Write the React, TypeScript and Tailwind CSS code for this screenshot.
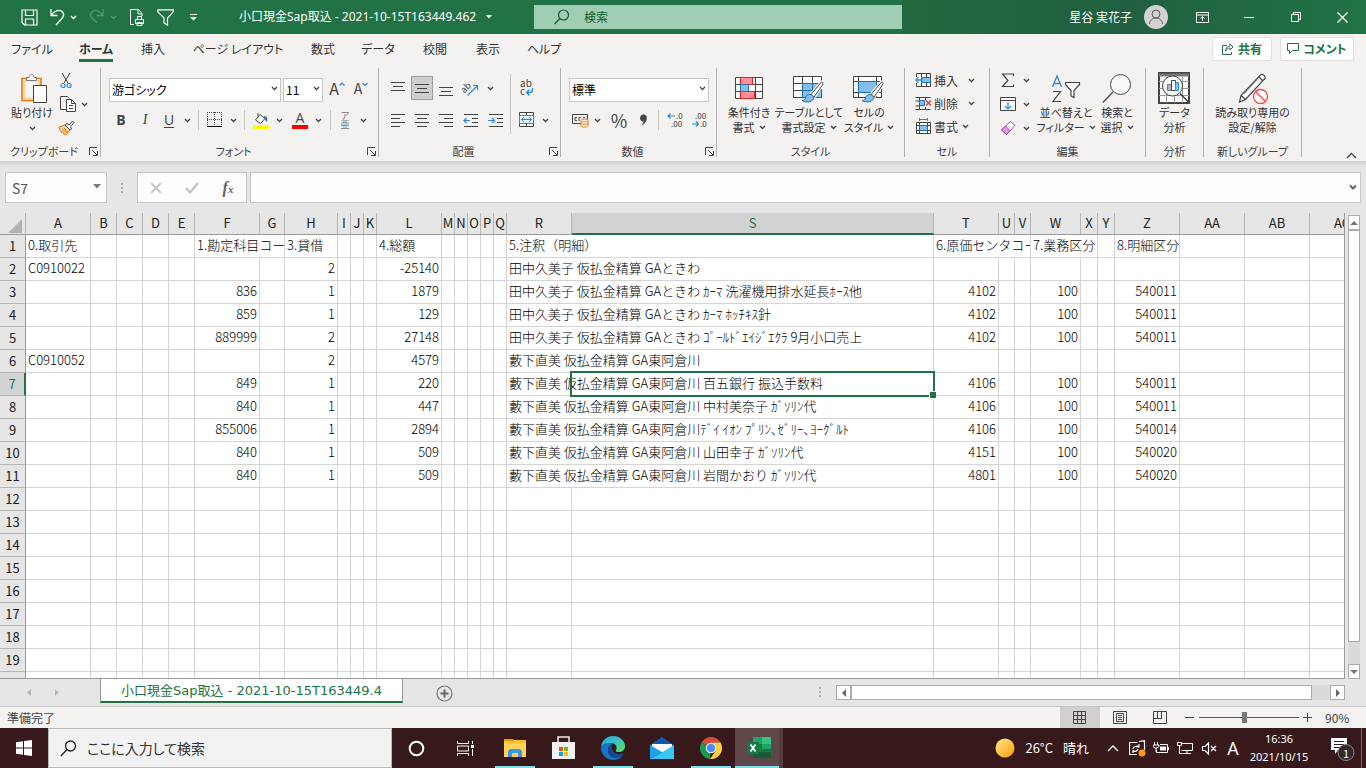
import type { ReactNode } from 'react';

const columns = [
  { name: 'A', width: 65 },
  { name: 'B', width: 26 },
  { name: 'C', width: 26 },
  { name: 'D', width: 26 },
  { name: 'E', width: 26 },
  { name: 'F', width: 65 },
  { name: 'G', width: 25 },
  { name: 'H', width: 53 },
  { name: 'I', width: 13 },
  { name: 'J', width: 13 },
  { name: 'K', width: 13 },
  { name: 'L', width: 65 },
  { name: 'M', width: 13 },
  { name: 'N', width: 13 },
  { name: 'O', width: 13 },
  { name: 'P', width: 13 },
  { name: 'Q', width: 13 },
  { name: 'R', width: 65 },
  { name: 'S', width: 362 },
  { name: 'T', width: 65 },
  { name: 'U', width: 16 },
  { name: 'V', width: 16 },
  { name: 'W', width: 50 },
  { name: 'X', width: 17 },
  { name: 'Y', width: 17 },
  { name: 'Z', width: 65 },
  { name: 'AA', width: 65 },
  { name: 'AB', width: 65 },
  { name: 'AC', width: 65 },
];

const ROW_HEADER_WIDTH = 26;
const tableWidth = columns.reduce((sum, c) => sum + c.width, ROW_HEADER_WIDTH);

type Cell = { v: string; span?: number };

const line = (h: string, l: string, note: string, rest: Record<string, Cell> = {}): Record<string, Cell> => ({
  H: { v: h },
  L: { v: l },
  R: { v: note, span: 2 },
  ...rest,
});

const detail = (f: string, t: string, z: string): Record<string, Cell> => ({
  F: { v: f },
  T: { v: t },
  W: { v: '100' },
  Z: { v: z },
});

const sheet: Record<string, Cell>[] = [
  {
    A: { v: '0.取引先' },
    F: { v: '1.勘定科目コー', span: 2 },
    H: { v: '3.貸借' },
    L: { v: '4.総額' },
    R: { v: '5.注釈（明細）', span: 2 },
    T: { v: '6.原価センタコー', span: 3 },
    W: { v: '7.業務区分', span: 2 },
    Z: { v: '8.明細区分' },
  },
  line('2', '-25140', '田中久美子 仮払金精算 GAときわ', { A: { v: 'C0910022' } }),
  line('1', '1879', '田中久美子 仮払金精算 GAときわ ｶｰﾏ 洗濯機用排水延長ﾎｰｽ他', detail('836', '4102', '540011')),
  line('1', '129', '田中久美子 仮払金精算 GAときわ ｶｰﾏ ﾎｯﾁｷｽ針', detail('859', '4102', '540011')),
  line('2', '27148', '田中久美子 仮払金精算 GAときわ ｺﾞｰﾙﾄﾞｴｲｼﾞｴｸﾗ 9月小口売上', detail('889999', '4102', '540011')),
  line('2', '4579', '藪下直美 仮払金精算 GA東阿倉川', { A: { v: 'C0910052' } }),
  line('1', '220', '藪下直美 仮払金精算 GA東阿倉川 百五銀行 振込手数料', detail('849', '4106', '540011')),
  line('1', '447', '藪下直美 仮払金精算 GA東阿倉川 中村美奈子 ｶﾞｿﾘﾝ代', detail('840', '4106', '540011')),
  line('1', '2894', '藪下直美 仮払金精算 GA東阿倉川ﾃﾞｲ ｲｵﾝ ﾌﾟﾘﾝ､ｾﾞﾘｰ､ﾖｰｸﾞﾙﾄ', detail('855006', '4106', '540014')),
  line('1', '509', '藪下直美 仮払金精算 GA東阿倉川 山田幸子 ｶﾞｿﾘﾝ代', detail('840', '4151', '540020')),
  line('1', '509', '藪下直美 仮払金精算 GA東阿倉川 岩間かおり ｶﾞｿﾘﾝ代', detail('840', '4801', '540020')),
];

const ROW_COUNT = 20;
const isNumber = (v: string) => /^-?\d+$/.test(v);

const tabs = [
  { label: 'ファイル', width: 'w-16' },
  { label: 'ホーム', width: 'w-16', active: true },
  { label: '挿入', width: 'w-[50px]' },
  { label: 'ページ レイアウト', width: 'w-[120px]' },
  { label: '数式', width: 'w-[50px]' },
  { label: 'データ', width: 'w-[60px]' },
  { label: '校閲', width: 'w-[54px]' },
  { label: '表示', width: 'w-[52px]' },
  { label: 'ヘルプ', width: 'w-[60px]' },
];

/* ---------- small pieces ---------- */

function Svg({ w, h, children, className = '' }: { w: number; h: number; children: ReactNode; className?: string }) {
  return (
    <svg width={w} height={h} viewBox={`0 0 ${w} ${h}`} fill="none" className={`shrink-0 ${className}`} aria-hidden="true">
      {children}
    </svg>
  );
}

function Chev({ className = 'text-[#444]' }: { className?: string }) {
  return (
    <Svg w={7} h={5} className={className}>
      <path d="M1 1l2.5 2.5L6 1" stroke="currentColor" strokeWidth="1.3" />
    </Svg>
  );
}

function IconButton({ label, className = 'w-6', children }: { label: string; className?: string; children: ReactNode }) {
  return (
    <button type="button" aria-label={label} className={`flex h-6 shrink-0 items-center justify-center ${className}`}>
      {children}
    </button>
  );
}

function DropButton({ label, className = 'w-[13px]' }: { label: string; className?: string }) {
  return (
    <IconButton label={label} className={className}>
      <Chev />
    </IconButton>
  );
}

function Sep({ className = 'mx-1' }: { className?: string }) {
  return <div className={`h-5 w-px shrink-0 bg-[#c8c6c4] ${className}`} />;
}

function Dropdown({ label, value, className }: { label: string; value: string; className: string }) {
  return (
    <div className={`relative h-6 shrink-0 ${className}`}>
      <select aria-label={label} className="h-full w-full appearance-none border border-[#c6c6c6] bg-white pl-0.5 text-xs text-black">
        <option>{value}</option>
      </select>
      <span className="pointer-events-none absolute top-2.5 right-[3px] flex">
        <Chev />
      </span>
    </div>
  );
}

function Group({ label, width, launcher, children }: { label: string; width: string; launcher?: boolean; children: ReactNode }) {
  return (
    <div className={`flex shrink-0 ${width}`}>
      <div className="flex min-w-0 flex-1 flex-col">
        <div className="flex h-[74px]">{children}</div>
        <div className="flex h-[19px] items-center text-[11px] text-[#444]">
          <span className={`flex-1 text-center whitespace-nowrap ${launcher ? 'pl-0.5' : ''}`}>{label}</span>
          {launcher && (
            <button type="button" aria-label={`${label}の設定`} className="flex w-3.5 justify-center">
              <Svg w={9} h={9}>
                <path d="M8 .5H.5V8M3 3l5 5M8.500 4v4.500H4" stroke="#444" />
              </Svg>
            </button>
          )}
        </div>
      </div>
      <div className="h-[89px] w-px bg-[#b3b0ad]" />
    </div>
  );
}

function BigButton({ icon, lines, className, chevron }: { icon: ReactNode; lines: [string, string]; className: string; chevron?: boolean }) {
  return (
    <button type="button" className={`flex shrink-0 flex-col items-center text-[11px] leading-[15px] whitespace-nowrap text-[#333] ${className}`}>
      <span className="flex h-[37px] items-center pt-1">{icon}</span>
      <span>{lines[0]}</span>
      <span className="flex items-center gap-1">
        {lines[1]}
        {chevron && <Chev />}
      </span>
    </button>
  );
}

function AlignIcon({ rows, y = 1 }: { rows: [number, number][]; y?: number }) {
  return (
    <Svg w={14} h={15}>
      {rows.map(([x, w], i) => (
        <rect key={i} x={x} y={y + i * 4} width={w} height="1" fill="#444" />
      ))}
    </Svg>
  );
}

/* ---------- ribbon drawings ---------- */

const PasteIcon = () => (
  <Svg w={28} h={32}>
    <path d="M2 5.500h19v22H2z" fill="#fff" stroke="#e07a10" strokeWidth="1.600" />
    <path d="M4 7.500h15v18H4z" fill="#f6f5f4" stroke="#fbd590" strokeWidth="2" />
    <path d="M6.500 7.500V4.500H9c.4-4 4.600-4 5 0h2.500v3z" fill="#fff" stroke="#777" />
    <path d="M13.500 12.500h13v17h-13z" fill="#fff" stroke="#444" />
  </Svg>
);

const CutIcon = () => (
  <Svg w={12} h={17}>
    <path d="M2 1l6 10M10 1L4 11" stroke="#444" />
    <circle cx="3" cy="13.500" r="2" stroke="#2b88d8" strokeWidth="1.200" />
    <circle cx="9" cy="13.500" r="2" stroke="#2b88d8" strokeWidth="1.200" />
  </Svg>
);

const CopyIcon = () => (
  <Svg w={16} h={17}>
    <path d="M6 13.500H.5v-13h7l2 2" stroke="#444" />
    <path d="M6.500 3.500h5l4 4v8h-9zM11.500 3.500v4h4M9 9.500h4M9 12.500h4" fill="#fff" stroke="#444" />
  </Svg>
);

const PainterIcon = () => (
  <Svg w={17} h={16}>
    <path d="M1 7l6-2 5 5-4 5-2-1-1-2-2 0z" fill="#fbd8a0" stroke="#e07a10" />
    <path d="M4 9l5 4M6 8l4 4" stroke="#e07a10" />
    <path d="M7 5l2-1.500L11 5l3.500-4L16 2.500 12.500 6.500 13.500 9 12 10z" fill="#fff" stroke="#444" />
  </Svg>
);

const BordersIcon = () => (
  <Svg w={16} h={16}>
    <path d="M.5 0v14M7.500 0v14M14.500 0v14M0 .5h15M0 7.500h15" stroke="#444" strokeDasharray="1 1" />
    <path d="M0 14.500h15" stroke="#111" />
  </Svg>
);

const FillIcon = () => (
  <Svg w={16} h={17}>
    <path d="M7 2.500L2.500 8l5 3.500L12 6.500 7 2.500zM5 4.500V1" fill="#fff" stroke="#444" />
    <path d="M11 4c3 0 3.500 2 3 6-1.500-1-2-3-3-6z" fill="#2b6cb0" />
    <path d="M0 13h16v4H0z" fill="#ff0" />
  </Svg>
);

const OrientationIcon = () => (
  <Svg w={17} h={17}>
    <text x="-1" y="10" fontSize="9" fill="#444" transform="rotate(-45 5 8)">ab</text>
    <path d="M5.500 15.500L15 6M11 5.500h4.500V10" stroke="#2b88d8" strokeWidth="1.200" />
  </Svg>
);

const WrapIcon = () => (
  <Svg w={16} h={18}>
    <text x="1" y="8" fontSize="10" fill="#444">ab</text>
    <text x="1" y="16" fontSize="10" fill="#444">c</text>
    <path d="M13.500 9v1.500c0 2-1 3-3 3H8M10.500 10.500l-3 3 3 3" stroke="#2b88d8" strokeWidth="1.300" />
  </Svg>
);

const IndentIcon = ({ back }: { back?: boolean }) => (
  <Svg w={15} h={15}>
    <path d="M1 1.500h14M9 5.500h6M9 9.500h6M1 13.500h14" stroke="#444" />
    <path d={back ? 'M7 7.500H1M3.500 5L1 7.500 3.500 10' : 'M0 7.500h6M4 5l2.500 2.500L4 10'} stroke="#2b88d8" strokeWidth="1.200" />
  </Svg>
);

const MergeIcon = () => (
  <Svg w={16} h={16}>
    <path d="M.5 .5h14v14H.5zM7.500 .5v3M7.500 11v4" fill="#fff" stroke="#444" />
    <path d="M.5 3.500h14v8H.5z" fill="#e8f4ff" stroke="#2b88d8" />
    <path d="M2.500 7.500h10M5 5L2.500 7.500 5 10M10 5l2.500 2.500L10 10" stroke="#2b88d8" />
  </Svg>
);

const CurrencyIcon = () => (
  <Svg w={17} h={15}>
    <path d="M.5 1.500h15v9H.5z" stroke="#444" />
    <path d="M5 4.500H3v3h2M7 8V4.500h2M11 4.500h2" stroke="#444" />
    <path d="M9 7.500v5c0 2 7 2 7 0v-5z" fill="#fff" stroke="#e07a10" />
    <ellipse cx="12.500" cy="7.500" rx="3.500" ry="1.500" fill="#fff" stroke="#e07a10" />
    <path d="M9 10c0 2 7 2 7 0" stroke="#e07a10" />
  </Svg>
);

const DecimalIcon = ({ more }: { more?: boolean }) => (
  <Svg w={17} h={16}>
    <text x={more ? 9 : 4} y="7" fontSize="8" fill="#333">{more ? '.0' : '.00'}</text>
    <text x={more ? 4 : 9} y="15" fontSize="8" fill="#333">{more ? '.00' : '.0'}</text>
    <path d={more ? 'M8 4H1M3.500 1.500L1 4l2.500 2.500' : 'M1 12h6.500M5 9.500L7.500 12 5 14.500'} stroke="#2b88d8" strokeWidth="1.200" />
  </Svg>
);

const Brush = () => (
  <>
    <path d="M28.500 8c1.500 0 2 1 1 3L21 23l-3-2.500z" fill="#fff" stroke="#fff" strokeWidth="3" />
    <path d="M28.500 8c1.500 0 2 1 1 3L21 23l-3-2.500z" fill="#fff" stroke="#444" />
    <path d="M18 20.500c-3-.5-5 1-5.500 3.500-.4 2-1.500 2.500-3.500 2.500 5 3 12 1 12-3.500z" fill="#83beec" stroke="#1f6fb2" />
  </>
);

const ConditionalIcon = () => (
  <Svg w={29} h={24}>
    <path d="M.5 .5h27v21H.5zM5.500 .5v21M20.500 .5v21M.5 7.500h27M.5 14.500h27" fill="#fff" stroke="#444" />
    <path d="M5.500 .5h12v7h-12zM5.500 14.500h14v7h-14z" fill="#ff8f95" stroke="#e02020" />
    <path d="M5.500 7.500h8v7h-8z" fill="#83beec" stroke="#1f6fb2" />
  </Svg>
);

const TableFormatIcon = () => (
  <Svg w={32} h={30}>
    <path d="M.5 2.500h28v21H.5z" fill="#fff" stroke="#444" />
    <path d="M9.500 9.500h19v14h-19z" fill="#83beec" />
    <path d="M9.500 2.500v7M19.500 2.500v7M.5 9.500h9M.5 16.500h9" stroke="#444" />
    <path d="M9.500 9.500h19v14h-19zM19.500 9.500v14M9.500 16.500h19" stroke="#1f6fb2" />
    <Brush />
  </Svg>
);

const CellStyleIcon = () => (
  <Svg w={32} h={30}>
    <path d="M.5 2.500h28v21H.5zM5.500 2.500v21M23.500 2.500v21M.5 7.500h28M.5 18.500h28" fill="#fff" stroke="#444" />
    <path d="M5.500 7.500h18v11h-18z" fill="#83beec" stroke="#1f6fb2" />
    <Brush />
  </Svg>
);

const InsertIcon = () => (
  <Svg w={17} h={15}>
    <path d="M1.500 .5h14v13h-14zM6.500 .5v13M11.500 .5v13M1.500 4.500h14M1.500 9.500h14" fill="#fff" stroke="#444" />
    <path d="M0 4h8v6H0z" fill="#fff" />
    <path d="M6.500 4.500h9v5h-9z" fill="#83beec" stroke="#1f6fb2" />
    <path d="M8 7H.8M3.500 4L.8 7l2.700 3" stroke="#2b88d8" strokeWidth="1.300" />
  </Svg>
);

const DeleteIcon = () => (
  <Svg w={17} h={15}>
    <path d="M.5 1.500h15M.5 13.500h15M4.500 1.500v12M10.500 1.500v3M10.500 11v2.500M.5 5h4M.5 10h4" stroke="#444" />
    <path d="M4.500 4.500h5v5h-5z" fill="#83beec" stroke="#1f6fb2" />
    <path d="M11 4.500l5 5M16 4.500l-5 5" stroke="#e8373d" strokeWidth="1.500" />
  </Svg>
);

const FormatIcon = () => (
  <Svg w={17} h={17}>
    <path d="M1.500 4.500h14v11h-14zM4.500 4.500v11M12.500 4.500v11M1.500 7.500h14M1.500 12.500h14" fill="#fff" stroke="#444" />
    <path d="M4.500 7.500h8v5h-8z" fill="#83beec" stroke="#1f6fb2" />
    <path d="M4.500 1.500h8M4.500 0v3M12.500 0v3" stroke="#2b88d8" />
  </Svg>
);

const SumIcon = () => (
  <Svg w={14} h={15}>
    <path d="M12.500 3V1H1.500l5.500 6.500-5.500 6h11v-2" stroke="#444" strokeWidth="1.200" />
  </Svg>
);

const FillDownIcon = () => (
  <Svg w={16} h={14}>
    <path d="M.5 .5h15v13H.5zM.5 3.500h15" fill="#fff" stroke="#444" />
    <path d="M8 5v7M5 9l3 3 3-3" stroke="#2b88d8" strokeWidth="1.200" />
  </Svg>
);

const EraserIcon = () => (
  <Svg w={17} h={16}>
    <path d="M10.500 1.500l4.500 4-8.500 9-5-4.500z" fill="#fff" stroke="#a33fb0" />
    <path d="M5.500 6L10 10.500l-3.500 4-5-4.500z" fill="#e19be8" stroke="#a33fb0" />
  </Svg>
);

const SortFilterIcon = () => (
  <Svg w={30} h={30}>
    <path d="M1.500 13L6 2l4.500 11M3 9.500h6" stroke="#2b88d8" strokeWidth="1.300" />
    <path d="M2 17.500h7.500L2 27.500h8" stroke="#444" strokeWidth="1.200" />
    <path d="M14.500 8.500h14v2l-5.500 6v7l-3-1.500V16.500l-5.500-6z" fill="#fff" stroke="#444" strokeWidth="1.200" />
  </Svg>
);

const FindIcon = () => (
  <Svg w={30} h={31}>
    <circle cx="18.500" cy="11.500" r="10" fill="#fafafa" stroke="#444" />
    <path d="M11 19L.8 29.500" stroke="#444" strokeWidth="1.200" />
  </Svg>
);

const AnalysisIcon = () => (
  <Svg w={33} h={33}>
    <path d="M1 1h30v30H1z" fill="#fff" stroke="#444" strokeWidth="2" />
    <path d="M1 3h30" stroke="#777" strokeWidth="3" />
    <path d="M1 9.500h30M1 16.500h30M1 23.500h30M8.500 5v26M16.500 22v9M24.500 5v26" stroke="#999" />
    <circle cx="14.500" cy="14" r="10" fill="#fafafa" stroke="#444" />
    <path d="M9.500 12.500h4v6h-4z" fill="#b0b0b0" stroke="#777" />
    <path d="M13.500 8.500h4v10h-4z" fill="#fff" stroke="#444" />
    <path d="M17.500 10.500h3v8h-3z" fill="#83beec" stroke="#2b88d8" />
    <path d="M22 21.500l10 10" stroke="#444" strokeWidth="1.600" />
  </Svg>
);

const PencilIcon = () => (
  <Svg w={32} h={32}>
    <path d="M24 1.500c2-1 5 2 4 4L8.500 26.500l-6 2.500 1.500-6.500zM22 4l4 4M4 22.500l4.500 4" fill="#fff" stroke="#444" strokeWidth="1.200" />
    <path d="M20 6.500L7 21" stroke="#777" />
    <circle cx="23.500" cy="23.500" r="7" fill="#fff" stroke="#f0484c" strokeWidth="1.300" />
    <path d="M18.500 18.500l10 10" stroke="#f0484c" strokeWidth="1.300" />
  </Svg>
);

/* ---------- sections ---------- */

function TitleBar() {
  return (
    <header className="flex h-[34px] shrink-0 items-center bg-[#217346] text-xs text-white">
      <div className="flex w-[534px] shrink-0 items-center pl-[17px]">
        <IconButton label="上書き保存">
          <Svg w={17} h={17}>
            <path d="M1 1h15v15H3.500L1 13.500zM4.500 1v5.500h8V1M4.500 16v-6h8v6" stroke="currentColor" strokeWidth="1.200" />
          </Svg>
        </IconButton>
        <IconButton label="元に戻す" className="ml-1 w-6">
          <Svg w={17} h={18}>
            <path d="M2 1v6.500h6.500M2 7.500C6 2 11 1 13.500 4s1 5-1 7L7 17" stroke="currentColor" strokeWidth="1.300" />
          </Svg>
        </IconButton>
        <IconButton label="元に戻すの一覧" className="w-2"><Chev className="text-white" /></IconButton>
        <IconButton label="やり直し" className="ml-2 w-6 text-[#4f9970]">
          <Svg w={17} h={18}>
            <path d="M14 1v6.500H7.500M14 7.500C10 2 6 1 3 4s-1 5 1 7l4 3.500" stroke="currentColor" strokeWidth="1.300" />
          </Svg>
        </IconButton>
        <IconButton label="やり直しの一覧" className="w-2"><Chev className="text-[#4f9970]" /></IconButton>
        <IconButton label="印刷プレビュー" className="ml-1.5 w-7">
          <Svg w={15} h={17}>
            <path d="M4 15.500H.5V.5h8l3.500 4V7M8 .5V5h4" stroke="currentColor" />
            <path d="M5.500 10.500h8v4h-8zM7.500 10.500v-3h4v3M7 13.500h5v3H7z" stroke="currentColor" />
          </Svg>
        </IconButton>
        <IconButton label="フィルター" className="w-7">
          <Svg w={17} h={17}>
            <path d="M.8 .8h15.400v2L10.500 9v7L7 14V9L.8 2.800z" stroke="currentColor" strokeWidth="1.200" />
          </Svg>
        </IconButton>
        <IconButton label="クイック アクセスのカスタマイズ" className="w-7">
          <Svg w={7} h={7}>
            <path d="M0 .5h7" stroke="currentColor" />
            <path d="M0 3h7L3.500 6.500z" fill="currentColor" />
          </Svg>
        </IconButton>
        <button type="button" className="ml-8 flex items-center gap-2.5 font-['Noto_Sans','Noto_Sans_CJK_JP',sans-serif] whitespace-nowrap">
          小口現金Sap取込 - 2021-10-15T163449.462
          <Svg w={6} h={4}><path d="M0 0h6L3 3.500z" fill="currentColor" /></Svg>
        </button>
      </div>
      <label className="flex h-6 min-w-0 flex-1 items-center gap-3.5 bg-[#a0ceb5] pl-5 text-[#0e5c2f]">
        <Svg w={16} h={16}>
          <circle cx="9.500" cy="6" r="5" stroke="currentColor" strokeWidth="1.200" />
          <path d="M6 9.500L.5 15" stroke="currentColor" strokeWidth="1.200" />
        </Svg>
        <input type="text" placeholder="検索" aria-label="検索" className="min-w-0 flex-1 bg-transparent outline-none placeholder:text-[#0e5c2f]" />
      </label>
      <div className="flex h-full w-[464px] shrink-0 items-center justify-end bg-linear-to-r from-[#21693f] via-[#206040] to-[#217346]">
        <button type="button" className="mr-[22px] flex items-center gap-3 whitespace-nowrap">
          星谷 実花子
          <Svg w={24} h={24}>
            <circle cx="12" cy="12" r="12" fill="#d2d2d2" />
            <circle cx="12" cy="9" r="4" stroke="#555" />
            <path d="M5.500 19c.5-8 12.500-8 13 0" stroke="#555" />
          </Svg>
        </button>
        <IconButton label="リボンの表示オプション">
          <Svg w={13} h={11}>
            <path d="M.5 .5h12v10H.5zM.5 3h12M6.500 9V5M4.500 6.500l2-2 2 2" stroke="currentColor" />
          </Svg>
        </IconButton>
        <IconButton label="最小化" className="w-[70px]"><Svg w={10} h={1}><path d="M0 .5h10" stroke="currentColor" /></Svg></IconButton>
        <IconButton label="元のサイズに戻す">
          <Svg w={10} h={10}>
            <path d="M.5 2.500h7v7h-7zM2.500 2.500v-2h7v7h-2" stroke="currentColor" />
          </Svg>
        </IconButton>
        <IconButton label="閉じる" className="mr-3 ml-[22px] w-6">
          <Svg w={11} h={11}><path d="M.5 .5l10 10M10.500 .5l-10 10" stroke="currentColor" strokeWidth="1.200" /></Svg>
        </IconButton>
      </div>
    </header>
  );
}

function TabRow() {
  return (
    <nav className="flex h-[34px] shrink-0 items-center justify-between bg-[#f3f2f1]">
      <div className="flex pb-0.5">
        {tabs.map((tab) => (
          <button key={tab.label} type="button" className={`flex flex-col items-center text-xs leading-5 whitespace-nowrap text-[#333] ${tab.width}`}>
            <span className={tab.active ? 'font-bold' : ''}>{tab.label}</span>
            <span className={`h-[3px] w-[34px] ${tab.active ? 'bg-[#217346]' : ''}`} />
          </button>
        ))}
      </div>
      <div className="mr-3 flex gap-2 pb-1 text-xs font-bold text-[#217346]">
        <button type="button" className="flex h-6 w-[60px] items-center justify-center gap-1 rounded-xs border border-[#e1dfdd] bg-white whitespace-nowrap">
          <Svg w={12} h={12}>
            <path d="M5 2.500H.5v9h9V9M8 .8L11 4 8 7V5C6 5 4.500 6 3.500 8 3.500 5 5.500 3 8 3z" stroke="currentColor" />
          </Svg>
          共有
        </button>
        <button type="button" className="flex h-6 w-[74px] items-center justify-center gap-1 rounded-xs border border-[#e1dfdd] bg-white whitespace-nowrap">
          <Svg w={12} h={12}><path d="M.5 .5h11v7H5.500l-3 3v-3h-2z" stroke="currentColor" /></Svg>
          コメント
        </button>
      </div>
    </nav>
  );
}

function Ribbon() {
  return (
    <section className="flex h-[93px] shrink-0 bg-[#f3f2f1]">
      <Group label="クリップボード" width="w-[101px]" launcher>
        <button type="button" className="ml-2 flex w-12 flex-col items-center text-[11px] leading-[15px] whitespace-nowrap text-[#333]">
          <span className="flex h-[37px] items-center pt-1 pl-1"><PasteIcon /></span>
          貼り付け
          <span className="flex h-4 items-center"><Chev /></span>
        </button>
        <div className="flex flex-col">
          <IconButton label="切り取り" className="w-5"><CutIcon /></IconButton>
          <div className="flex">
            <IconButton label="コピー" className="w-6"><CopyIcon /></IconButton>
            <DropButton label="コピーの種類" className="w-2" />
          </div>
          <IconButton label="書式のコピー" className="w-5"><PainterIcon /></IconButton>
        </div>
      </Group>

      <Group label="フォント" width="w-[278px]" launcher>
        <div className="flex flex-col gap-2 pt-2 pl-2">
          <div className="flex items-center">
            <Dropdown label="フォント名" value="游ゴシック" className="w-[172px]" />
            <Dropdown label="フォント サイズ" value="11" className="ml-0.5 w-10" />
            <IconButton label="フォント サイズの拡大" className="ml-0.5 w-6 text-base text-[#444]">
              A<Svg w={6} h={12}><path d="M.5 3.500l2.500-2.500 2.500 2.500" stroke="#2b88d8" strokeWidth="1.200" /></Svg>
            </IconButton>
            <IconButton label="フォント サイズの縮小" className="w-6 text-sm text-[#444]">
              A<Svg w={6} h={12}><path d="M.5 1l2.500 2.500L5.500 1" stroke="#2b88d8" strokeWidth="1.200" /></Svg>
            </IconButton>
          </div>
          <div className="flex items-center font-['Open_Sans','Noto_Sans_CJK_JP',sans-serif] text-sm text-[#444]">
            <IconButton label="太字"><span className="font-bold">B</span></IconButton>
            <IconButton label="斜体"><span className="font-['Liberation_Serif',serif] italic">I</span></IconButton>
            <IconButton label="下線"><span className="underline underline-offset-2">U</span></IconButton>
            <DropButton label="下線の種類" />
            <Sep />
            <IconButton label="罫線"><BordersIcon /></IconButton>
            <DropButton label="罫線の種類" />
            <Sep />
            <IconButton label="塗りつぶしの色"><FillIcon /></IconButton>
            <DropButton label="塗りつぶしの色の一覧" />
            <IconButton label="フォントの色" className="w-7">
              <span className="flex flex-col items-center leading-[14px]">
                A<span className="h-1 w-4 bg-[#f00]" />
              </span>
            </IconButton>
            <DropButton label="フォントの色の一覧" className="w-2" />
            <Sep className="ml-2" />
            <IconButton label="ふりがなの表示" className="w-7">
              <span className="flex flex-col items-center text-[9px] leading-[9px] text-[#777]">
                <span>ア</span>
                <span>亜</span>
              </span>
            </IconButton>
            <DropButton label="ふりがなの設定" className="w-2" />
          </div>
        </div>
      </Group>

      <Group label="配置" width="w-[182px]" launcher>
        <div className="grid grid-cols-[24px_24px_24px_26px_22px] content-start gap-y-2 pt-2 pl-[7px]">
          <IconButton label="上揃え"><AlignIcon rows={[[0, 14], [2, 10], [0, 14]]} /></IconButton>
          <IconButton label="上下中央揃え" className="w-[22px] justify-self-center border border-[#a19f9d] bg-[#d0cecc]">
            <AlignIcon rows={[[0, 14], [2, 10], [0, 14]]} y={3} />
          </IconButton>
          <IconButton label="下揃え"><AlignIcon rows={[[0, 14], [2, 10], [0, 14]]} y={6} /></IconButton>
          <IconButton label="方向"><OrientationIcon /></IconButton>
          <DropButton label="方向の一覧" />
          <IconButton label="左揃え"><AlignIcon rows={[[0, 14], [0, 9], [0, 14], [0, 9]]} /></IconButton>
          <IconButton label="中央揃え"><AlignIcon rows={[[0, 14], [2, 10], [0, 14], [2, 10]]} /></IconButton>
          <IconButton label="右揃え"><AlignIcon rows={[[0, 14], [5, 9], [0, 14], [5, 9]]} /></IconButton>
          <IconButton label="インデントを減らす"><IndentIcon back /></IconButton>
          <IconButton label="インデントを増やす" className="w-[22px]"><IndentIcon /></IconButton>
        </div>
        <div className="mt-1.5 ml-1 h-[60px] w-px bg-[#c8c6c4]" />
        <div className="flex flex-col gap-2 pt-2 pl-1">
          <IconButton label="折り返して全体を表示する"><WrapIcon /></IconButton>
          <div className="flex">
            <IconButton label="セルを結合して中央揃え"><MergeIcon /></IconButton>
            <DropButton label="結合の種類" />
          </div>
        </div>
      </Group>

      <Group label="数値" width="w-[156px]" launcher>
        <div className="flex flex-col gap-2 pt-2 pl-2">
          <Dropdown label="表示形式" value="標準" className="w-[140px]" />
          <div className="flex items-center text-[#444]">
            <IconButton label="通貨表示形式" className="w-[22px]"><CurrencyIcon /></IconButton>
            <DropButton label="通貨の一覧" className="w-3" />
            <IconButton label="パーセント スタイル" className="w-8 text-lg">%</IconButton>
            <IconButton label="桁区切りスタイル" className="w-4">
              <Svg w={10} h={14}>
                <path d="M5 1.500c3-.5 4.500 2 3.500 5.500-.8 2.800-3 5-6 6 2-1.500 3-3 3-4.500C1 8.500 1 2 5 1.500z" fill="#444" />
              </Svg>
            </IconButton>
            <Sep className="mr-1 ml-[7px]" />
            <IconButton label="小数点以下の表示桁数を増やす"><DecimalIcon more /></IconButton>
            <IconButton label="小数点以下の表示桁数を減らす"><DecimalIcon /></IconButton>
          </div>
        </div>
      </Group>

      <Group label="スタイル" width="w-[188px]">
        <BigButton className="ml-1 w-14" icon={<ConditionalIcon />} lines={['条件付き', '書式']} chevron />
        <BigButton className="w-16" icon={<TableFormatIcon />} lines={['テーブルとして', '書式設定']} chevron />
        <BigButton className="w-14" icon={<CellStyleIcon />} lines={['セルの', 'スタイル']} chevron />
      </Group>

      <Group label="セル" width="w-[85px]">
        <div className="flex flex-col pt-px pl-2.5 text-xs text-[#333]">
          <button type="button" className="flex h-[23px] items-center gap-0.5 whitespace-nowrap"><InsertIcon />挿入<Chev className="ml-2 text-[#444]" /></button>
          <button type="button" className="flex h-[23px] items-center gap-0.5 whitespace-nowrap"><DeleteIcon />削除<Chev className="ml-2 text-[#444]" /></button>
          <button type="button" className="flex h-[23px] items-center gap-0.5 whitespace-nowrap"><FormatIcon />書式<Chev className="ml-0.5 text-[#444]" /></button>
        </div>
      </Group>

      <Group label="編集" width="w-[156px]">
        <div className="flex flex-col pl-1.5">
          <div className="flex"><IconButton label="合計"><SumIcon /></IconButton><DropButton label="合計の一覧" /></div>
          <div className="flex"><IconButton label="フィル"><FillDownIcon /></IconButton><DropButton label="フィルの一覧" /></div>
          <div className="flex"><IconButton label="クリア"><EraserIcon /></IconButton><DropButton label="クリアの一覧" /></div>
        </div>
        <BigButton className="ml-1 w-[58px]" icon={<SortFilterIcon />} lines={['並べ替えと', 'フィルター']} chevron />
        <BigButton className="w-11" icon={<FindIcon />} lines={['検索と', '選択']} chevron />
      </Group>

      <Group label="分析" width="w-[58px]">
        <BigButton className="w-full" icon={<AnalysisIcon />} lines={['データ', '分析']} />
      </Group>

      <Group label="新しいグループ" width="w-[98px]">
        <BigButton className="w-full" icon={<PencilIcon />} lines={['読み取り専用の', '設定/解除']} />
      </Group>

      <div className="flex flex-1 items-end justify-end pr-2">
        <button type="button" aria-label="リボンを折りたたむ" className="flex h-3 w-3 items-center">
          <Svg w={11} h={7}><path d="M1 6l4.500-4.500L10 6" stroke="#444" strokeWidth="1.300" /></Svg>
        </button>
      </div>
    </section>
  );
}

function Dots() {
  return (
    <Svg w={2} h={10}>
      <path d="M0 0h2v2H0zM0 4h2v2H0zM0 8h2v2H0z" fill="#aaa" />
    </Svg>
  );
}

function FormulaBar() {
  return (
    <section className="shrink-0 bg-[#e6e6e6]">
      <div className="h-1.5 bg-linear-to-b from-[#d0d0d0] to-[#e6e6e6]" />
      <div className="flex h-[46px] items-start pt-[5px] pr-[5px] pl-[5px]">
        <div className="relative h-[31px] w-[102px] shrink-0">
          <input aria-label="名前ボックス" defaultValue="S7" className="h-full w-full border border-[#c6c6c6] bg-[#fdfdfd] pl-1.5 text-sm text-[#555]" />
          <span className="pointer-events-none absolute top-3 right-1.5 flex">
            <Svg w={8} h={5}><path d="M0 0h8L4 4.500z" fill="#777" /></Svg>
          </span>
        </div>
        <div className="flex h-[31px] w-[30px] items-center justify-center"><Dots /></div>
        <div className="flex h-[31px] w-[110px] shrink-0 items-center justify-around border border-[#c6c6c6] bg-[#fdfdfd]">
          <IconButton label="キャンセル">
            <Svg w={12} h={12}><path d="M1 1l10 10M11 1L1 11" stroke="#c4c4c4" strokeWidth="1.800" /></Svg>
          </IconButton>
          <IconButton label="入力">
            <Svg w={14} h={12}><path d="M1 6l4 4.500L13 1" stroke="#c4c4c4" strokeWidth="2.400" /></Svg>
          </IconButton>
          <IconButton label="関数の挿入">
            <span className="font-['Liberation_Serif',serif] text-base font-bold text-[#666] italic">f<span className="text-[11px]">x</span></span>
          </IconButton>
        </div>
        <div className="relative ml-[3px] h-[31px] min-w-0 flex-1">
          <input aria-label="数式バー" className="h-full w-full border border-[#c6c6c6] bg-[#fdfdfd] px-2 text-sm" />
          <span className="pointer-events-none absolute top-3 right-1 flex">
            <Svg w={8} h={7}><path d="M1 1.500l3 3 3-3" stroke="#666" strokeWidth="2" /></Svg>
          </span>
        </div>
      </div>
    </section>
  );
}

function SheetRow({ index }: { index: number }) {
  const row = sheet[index] ?? {};
  const active = index === 6;
  const cells: ReactNode[] = [];
  for (let c = 0; c < columns.length; ) {
    const cell = row[columns[c].name];
    const span = cell?.span ?? 1;
    const right = cell && isNumber(cell.v);
    const selected = active && columns[c].name === 'R';
    cells.push(
      <td
        key={c}
        colSpan={span}
        className={`border-r border-b border-[#d4d4d4] p-0 align-top leading-5 whitespace-nowrap ${selected ? 'relative' : 'overflow-hidden'} ${right ? 'pr-0.5 text-right' : 'pl-0.5 text-left'}`}
      >
        {cell?.v}
        {selected && (
          <div className="absolute -top-0.5 left-[63px] h-[26px] w-[365px] border-2 border-[#217346]">
            <span className="absolute -right-[3px] -bottom-[3px] h-[7px] w-[7px] border-t border-l border-white bg-[#217346]" />
          </div>
        )}
      </td>,
    );
    c += span;
  }
  return (
    <tr className="h-[23px]">
      <th
        scope="row"
        className={`border-b border-b-[#b5b5b5] p-0 text-center align-top leading-[22px] font-normal ${active ? 'border-r-2 border-r-[#217346] bg-[#d2d2d2] text-[#217346]' : 'border-r border-r-[#999] bg-[#e6e6e6] text-[#222]'}`}
      >
        {index + 1}
      </th>
      {cells}
    </tr>
  );
}

function SheetArea() {
  return (
    <main className="flex min-h-0 flex-1 bg-[#e6e6e6]">
      <div className="min-w-0 flex-1 overflow-hidden border-r border-b border-[#999] bg-white font-['Noto_Sans_CJK_JP',sans-serif] text-[13px] font-light text-black [font-feature-settings:normal]">
        <table className="table-fixed border-separate border-spacing-0" style={{ width: tableWidth }}>
          <colgroup>
            <col style={{ width: ROW_HEADER_WIDTH }} />
            {columns.map((c) => (
              <col key={c.name} style={{ width: c.width }} />
            ))}
          </colgroup>
          <thead>
            <tr className="h-[22px] bg-[#e6e6e6]">
              <th aria-label="すべて選択" className="border-r border-b border-r-[#b5b5b5] border-b-[#999] p-0">
                <Svg w={14} h={14} className="mt-1 ml-2"><path d="M14 0v14H0z" fill="#b3b3b3" /></Svg>
              </th>
              {columns.map((c) => (
                <th
                  key={c.name}
                  scope="col"
                  className={`border-r border-r-[#b5b5b5] p-0 text-center align-top leading-5 font-normal ${c.name === 'S' ? 'border-b-2 border-b-[#217346] bg-[#d2d2d2] text-[#217346]' : 'border-b border-b-[#999] text-[#222]'}`}
                >
                  {c.name}
                </th>
              ))}
            </tr>
          </thead>
          <tbody>
            {Array.from({ length: ROW_COUNT }, (_, i) => (
              <SheetRow key={i} index={i} />
            ))}
          </tbody>
        </table>
      </div>
      <div className="flex w-[21px] shrink-0 flex-col pt-0.5 pr-1.5 pl-[3px]">
        <button type="button" aria-label="上へスクロール" className="flex h-[15px] shrink-0 items-center justify-center border border-[#ababab] bg-white">
          <Svg w={8} h={4}><path d="M0 4h8L4 0z" fill="#777" /></Svg>
        </button>
        <div className="flex flex-1 flex-col bg-[#dadada]">
          <div className="h-[95%] border border-[#ababab] bg-white" />
        </div>
        <button type="button" aria-label="下へスクロール" className="flex h-[15px] shrink-0 items-center justify-center border border-[#ababab] bg-white">
          <Svg w={8} h={4}><path d="M0 0h8L4 4z" fill="#777" /></Svg>
        </button>
      </div>
    </main>
  );
}

function SheetTabs() {
  return (
    <section className="flex h-7 shrink-0 items-start border-b border-[#c6c6c6] bg-[#e6e6e6]">
      <div className="flex h-[26px] w-[100px] shrink-0 items-center gap-6 pl-[27px]">
        <button type="button" aria-label="前のシート"><Svg w={4} h={7}><path d="M4 0v7L0 3.500z" fill="#b8b8b8" /></Svg></button>
        <button type="button" aria-label="次のシート"><Svg w={4} h={7}><path d="M0 0v7l4-3.500z" fill="#b8b8b8" /></Svg></button>
      </div>
      <button
        type="button"
        className="h-6 w-[303px] shrink-0 border-x border-b-2 border-x-[#999] border-b-[#217346] bg-white pt-0.5 font-['DejaVu_Sans','Noto_Sans_CJK_JP',sans-serif] text-[13px] leading-5 whitespace-nowrap text-[#217346]"
      >
        小口現金Sap取込 - 2021-10-15T163449.4
      </button>
      <IconButton label="新しいシート" className="ml-[29px] w-6">
        <Svg w={17} h={17} className="mt-1">
          <circle cx="8.500" cy="8.500" r="7.500" stroke="#777" strokeWidth="1.200" />
          <path d="M8.500 4.500v8M4.500 8.500h8" stroke="#666" strokeWidth="2" />
        </Svg>
      </IconButton>
      <div className="flex-1" />
      <div className="mt-2 mr-[15px]"><Dots /></div>
      <div className="mt-1.5 mr-[21px] flex h-[15px] w-[509px] shrink-0 bg-[#dadada]">
        <button type="button" aria-label="左へスクロール" className="flex w-[15px] items-center justify-center border border-[#ababab] bg-white">
          <Svg w={4} h={8}><path d="M4 0v8L0 4z" fill="#666" /></Svg>
        </button>
        <div className="w-[461px] border border-[#ababab] bg-white" />
        <div className="flex-1" />
        <button type="button" aria-label="右へスクロール" className="flex w-[15px] items-center justify-center border border-[#ababab] bg-white">
          <Svg w={4} h={8}><path d="M0 0v8l4-4z" fill="#666" /></Svg>
        </button>
      </div>
    </section>
  );
}

function StatusBar() {
  return (
    <section className="flex h-[21px] shrink-0 items-center bg-[#f3f2f1] pl-[7px] text-xs text-[#444]">
      <span className="flex-1">準備完了</span>
      <button type="button" aria-label="標準" className="flex h-full w-10 items-center justify-center bg-[#d2d0ce]">
        <Svg w={14} h={13}><path d="M.5 .5h12v12H.5zM4.500 .5v12M8.500 .5v12M.5 4.500h12M.5 8.500h12" stroke="#444" /></Svg>
      </button>
      <button type="button" aria-label="ページ レイアウト" className="flex h-full w-10 items-center justify-center">
        <Svg w={14} h={13}><path d="M.5 .5h13v12H.5zM3.500 2.500h7v8h-7zM5 4.500h4M5 6.500h4M5 8.500h4" stroke="#444" /></Svg>
      </button>
      <button type="button" aria-label="改ページ プレビュー" className="flex h-full w-10 items-center justify-center">
        <Svg w={14} h={13}><path d="M.5 .5h13v12H.5zM4.500 .5v7M.5 7.500h8v-7" stroke="#444" /></Svg>
      </button>
      <button type="button" aria-label="縮小" className="flex h-full w-[19px] items-center justify-center">
        <Svg w={9} h={9}><path d="M0 4.500h9" stroke="#444" /></Svg>
      </button>
      <input
        type="range"
        aria-label="ズーム"
        min={0}
        max={100}
        defaultValue={45}
        className="h-[11px] w-[100px] appearance-none bg-[linear-gradient(#555,#555)] bg-[length:100%_1px] bg-center bg-no-repeat [&::-webkit-slider-thumb]:h-[11px] [&::-webkit-slider-thumb]:w-[5px] [&::-webkit-slider-thumb]:appearance-none [&::-webkit-slider-thumb]:bg-[#777]"
      />
      <button type="button" aria-label="拡大" className="flex h-full w-[17px] items-center justify-center">
        <Svg w={9} h={9}><path d="M0 4.500h9M4.500 0v9" stroke="#444" /></Svg>
      </button>
      <span className="w-[50px] pl-[9px]">90%</span>
    </section>
  );
}

function TaskItem({ label, open, children }: { label: string; open?: boolean; children: ReactNode }) {
  return (
    <button type="button" aria-label={label} className="flex h-10 w-[49px] shrink-0 flex-col items-center">
      <span className="flex h-[38px] items-center pt-0.5">{children}</span>
      <span className={`h-0.5 w-10 ${open ? 'bg-[#81dde8]' : ''}`} />
    </button>
  );
}

function TaskBar() {
  return (
    <footer className="flex h-10 shrink-0 items-center bg-[#38191b] text-white">
      <button type="button" aria-label="スタート" className="flex h-full w-12 shrink-0 items-center justify-center">
        <Svg w={16} h={16}><path d="M0 2.200L7 1.200v6.300H0zM8 1l8-1v7.500H8zM0 8.500h7v6.300l-7-1zM8 8.500h8V16l-8-1z" fill="#fff" /></Svg>
      </button>
      <label className="flex h-full w-[344px] shrink-0 items-center gap-2.5 border border-[#b9b9b9] bg-[#f2f2f2] pl-[11px] text-[#222]">
        <Svg w={17} h={17}>
          <circle cx="10.500" cy="6" r="5" stroke="currentColor" strokeWidth="1.300" />
          <path d="M7 9.500L.8 16" stroke="currentColor" strokeWidth="1.300" />
        </Svg>
        <input type="text" aria-label="ここに入力して検索" placeholder="ここに入力して検索" className="min-w-0 flex-1 bg-transparent text-sm outline-none placeholder:text-[#333]" />
      </label>
      <TaskItem label="Cortana">
        <Svg w={17} h={17}><circle cx="8.500" cy="8.500" r="6.800" stroke="#fff" strokeWidth="2" /></Svg>
      </TaskItem>
      <TaskItem label="タスク ビュー">
        <Svg w={17} h={15}><path d="M.5 0v2.500h11V0M.5 15v-2.500h11V15M.5 5h11v5H.5zM15.500 0v3M15.500 8v7" stroke="#fff" /><path d="M14 4h3v3h-3z" fill="#fff" /></Svg>
      </TaskItem>
      <TaskItem label="エクスプローラー" open>
        <Svg w={22} h={19}>
          <path d="M0 0h9l1 2H0z" fill="#e3a000" />
          <path d="M0 2h22v16H0z" fill="#ffd35c" />
          <path d="M0 2h9l1-1h12v3H0z" fill="#ffc22e" />
          <path d="M4 18v-6l2-2h10l2 2v6h-4v-4H8v4z" fill="#3a96dd" />
        </Svg>
      </TaskItem>
      <TaskItem label="Microsoft Store">
        <Svg w={23} h={24}>
          <path d="M6 7V1h11v6" stroke="#eee" strokeWidth="1.500" />
          <path d="M0 6h23v17H0z" fill="#f2f2f2" />
          <path d="M7 11h4v4H7z" fill="#f25022" />
          <path d="M12 11h4v4h-4z" fill="#7fba00" />
          <path d="M7 16h4v4H7z" fill="#00a4ef" />
          <path d="M12 16h4v4h-4z" fill="#ffb900" />
        </Svg>
      </TaskItem>
      <TaskItem label="Microsoft Edge" open>
        <Svg w={24} h={24}>
          <defs>
            <linearGradient id="edgeTop" x1="0" y1="0" x2="1" y2="1">
              <stop offset="0" stopColor="#2aa7e8" />
              <stop offset=".5" stopColor="#36c4c4" />
              <stop offset="1" stopColor="#62e052" />
            </linearGradient>
          </defs>
          <path d="M0 11C1 4 6 0 12 0c7 0 12 5 12 10 0 4-3 6-6 6-2 0-3.500-.5-3-1.500 2-4-1-7.500-5-7.500C5 7 2 8 0 11z" fill="url(#edgeTop)" />
          <path d="M0 12c0-3 4-5 8-5 2 0 4 1 4 1-5 2-5 6-5 8 1 4 5 6 9 5.500 2 0 4-1 5.500-1.500C19 23 15 24 12 24 5 24 0 18 0 12z" fill="#1673c5" />
          <path d="M7 15c-.5-4 2-6.500 4.500-7-2 4 0 9 5.500 10 2.500.5 5-.5 5.500-.5.5 0 .5 1-.5 2-7 5-14.500 1.500-15-4.500z" fill="#124a94" />
        </Svg>
      </TaskItem>
      <TaskItem label="メール">
        <Svg w={24} h={22}>
          <path d="M0 8L12 0l12 8v14H0z" fill="#0c5ea8" />
          <path d="M2 7h20v8H2z" fill="#fff" />
          <path d="M0 8l12 7-12 7z" fill="#1fa0e8" />
          <path d="M24 8L4 20l-4 2h24z" fill="#38c6f4" />
        </Svg>
      </TaskItem>
      <TaskItem label="Google Chrome" open>
        <Svg w={22} h={22}>
          <path d="M11 11L1.500 5.500A11 11 0 0 1 20.500 5.500H11z" fill="#db4a3f" />
          <path d="M11 11l-1 11A11 11 0 0 1 1.500 5.500z" fill="#169c57" />
          <path d="M11 5.500h9.500A11 11 0 0 1 10 22l5.500-8z" fill="#ffcd40" />
          <circle cx="11" cy="11" r="5.200" fill="#f5f5f5" />
          <circle cx="11" cy="11" r="4.200" fill="#4c8bf5" />
        </Svg>
      </TaskItem>
      <button type="button" aria-label="Excel" className="flex h-10 w-12 shrink-0 flex-col items-center border-r-4 border-[#563c3e] bg-[#604749]">
        <span className="flex h-[38px] items-center pt-0.5 pl-1">
          <Svg w={24} h={22}>
            <path d="M6 0h9v7H6z" fill="#21a366" />
            <path d="M15 0h9v7h-9z" fill="#33c481" />
            <path d="M6 7h9v8H6z" fill="#107c41" />
            <path d="M15 7h9v5h-9z" fill="#21a366" />
            <path d="M15 12h9v4h-9z" fill="#107c41" />
            <path d="M6 15h18v6H6z" fill="#185c37" />
            <path d="M0 5h12v12H0z" fill="#107c41" />
            <path d="M3.500 7.500l5 7M8.500 7.500l-5 7" stroke="#fff" strokeWidth="1.800" />
          </Svg>
        </span>
        <span className="h-0.5 w-full bg-[#81dde8]" />
      </button>
      <div className="flex-1" />
      <button type="button" className="flex shrink-0 items-center gap-2.5 text-[13px] whitespace-nowrap">
        <Svg w={20} h={20}>
          <defs>
            <linearGradient id="sun" x1="0" y1="0" x2="1" y2="1">
              <stop offset="0" stopColor="#ffe98a" />
              <stop offset="1" stopColor="#ff9a0a" />
            </linearGradient>
          </defs>
          <circle cx="10" cy="10" r="9.500" fill="url(#sun)" />
        </Svg>
        <span>26°C</span>
        <span>晴れ</span>
      </button>
      <div className="ml-3 flex shrink-0 items-center">
        <IconButton label="隠れているインジケーター"><Svg w={12} h={8}><path d="M1 7l5-5 5 5" stroke="#fff" strokeWidth="1.300" /></Svg></IconButton>
        <IconButton label="更新">
          <Svg w={17} h={17}>
            <path d="M10 1.500L15.500 .8V10M8 14.500H.5v-12h8M4 9c0-2 4-4 6-2M10 4v3H7.500M9 9c-1 3-4 3-5 1v3" stroke="#fff" strokeWidth="1.200" />
            <circle cx="13" cy="13" r="3.500" fill="#ff9a0a" />
          </Svg>
        </IconButton>
        <IconButton label="電源">
          <Svg w={16} h={13}>
            <path d="M7 2.500h7.500v8H3.500V8" stroke="#fff" />
            <path d="M15 5h1v3h-1zM7 4.500h6v4H7z" fill="#fff" />
            <path d="M1.500 0v3M4.500 0v3M0 3h6v1.500L3 6.500 0 4.500zM3 6v4" stroke="#fff" />
          </Svg>
        </IconButton>
        <IconButton label="ネットワーク">
          <Svg w={17} h={14}><path d="M5 2.500h10.500v7h-11M10 9.500v3M6 12.500h8M.5 1.500h4v3h-4zM2.500 4.500v8h3" stroke="#fff" /></Svg>
        </IconButton>
        <IconButton label="音量">
          <Svg w={15} h={13}><path d="M.5 4.500H3l3.500-3.500v11L3 8.500H.5zM9 4l5 5M14 4L9 9" stroke="#fff" strokeWidth="1.200" /></Svg>
        </IconButton>
        <IconButton label="入力モード" className="w-6 font-['Open_Sans',sans-serif] text-lg">A</IconButton>
      </div>
      <time className="w-[68px] shrink-0 text-center font-['Noto_Sans',sans-serif] text-[11px] leading-[18px] whitespace-nowrap">
        16:36
        <br />
        2021/10/15
      </time>
      <button type="button" aria-label="通知" className="ml-2.5 flex h-full w-[38px] shrink-0 items-center justify-center">
        <span className="relative">
          <Svg w={26} h={26}>
            <path d="M2 3h16v12H9l-3 4v-4H2z" fill="#fff" />
            <path d="M5 6.500h10M5 9.500h10M5 12.500h6" stroke="#38191b" />
            <circle cx="17" cy="17.500" r="8" fill="#2f2a2b" stroke="#888" />
          </Svg>
          <span className="absolute top-[11px] left-[14px] text-[11px] leading-[14px]">1</span>
        </span>
      </button>
      <div className="h-full w-[5px] shrink-0 border-l border-[#7a6566]" />
    </footer>
  );
}

export default function App() {
  return (
    <div className="flex h-screen flex-col overflow-hidden bg-[#f3f2f1] font-['Noto_Sans_CJK_JP',sans-serif] [font-feature-settings:'palt']">
      <TitleBar />
      <TabRow />
      <Ribbon />
      <FormulaBar />
      <SheetArea />
      <SheetTabs />
      <StatusBar />
      <TaskBar />
    </div>
  );
}
